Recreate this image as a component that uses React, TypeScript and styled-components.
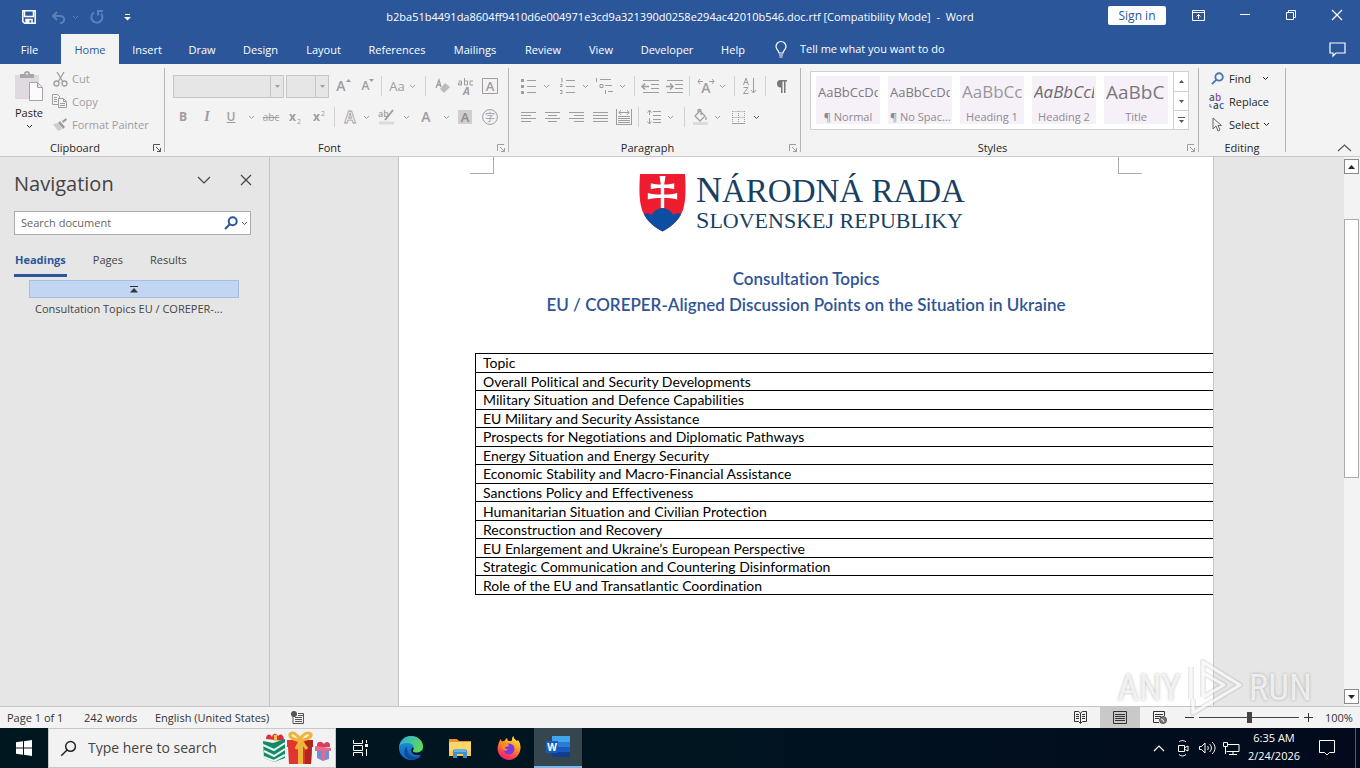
import React from "react";
import styled, { createGlobalStyle } from "styled-components";

const UI = `"Open Sans", "Noto Sans", sans-serif`;
const BLUE = "#2b579a";
const DIM = "#a09da0";

const Global = createGlobalStyle`
  *, *::before, *::after { box-sizing: border-box; }
  html, body { margin: 0; padding: 0; }
  body { font-family: ${UI}; font-size: 11px; line-height: 16px; color: #262626; background: #e6e6e6; }
  button, input { font: inherit; color: inherit; margin: 0; }
  button { padding: 0; border: 0; background: none; }
  svg { display: block; flex: none; overflow: visible; }
`;

const Screen = styled.div`
  display: flex;
  flex-direction: column;
  height: 100vh;
  overflow: hidden;
`;

/* ---------- title bar ---------- */

const TitleBar = styled.header`
  display: grid;
  grid-template-columns: 1fr auto 1fr;
  align-items: center;
  height: 34px;
  flex: none;
  background: ${BLUE};
  color: #fff;
`;

const QuickAccess = styled.div`
  display: flex;
  align-items: center;
  padding-left: 15px;
`;

const TitleText = styled.h1`
  margin: 0;
  font-size: 11px;
  font-weight: 400;
  white-space: nowrap;
`;

const WindowButtons = styled.div`
  display: flex;
  align-items: center;
  justify-content: flex-end;
  padding-bottom: 4px;
`;

const SignIn = styled.button`
  width: 58px;
  height: 19px;
  margin-right: 9px;
  border-radius: 2px;
  background: #fff;
  color: ${BLUE};
  font-size: 12px;
  line-height: 19px;
`;

const Cell = styled.button<{ $w?: number; $h?: number; $color?: string }>`
  display: flex;
  align-items: center;
  justify-content: center;
  flex: none;
  width: ${(p) => p.$w ?? 24}px;
  height: ${(p) => p.$h ?? 24}px;
  color: ${(p) => p.$color ?? "inherit"};
`;

/* ---------- tabs ---------- */

const TabStrip = styled.nav`
  display: flex;
  align-items: stretch;
  height: 30px;
  flex: none;
  background: ${BLUE};
  color: #fff;
`;

const Tab = styled.button<{ $w: number; $active?: boolean }>`
  width: ${(p) => p.$w}px;
  flex: none;
  padding-top: 2px;
  background: ${(p) => (p.$active ? "#f3f3f3" : "transparent")};
  color: ${(p) => (p.$active ? BLUE : "#fff")};
  &:first-child { margin-right: 2px; }
`;

const TellMe = styled.button`
  display: flex;
  align-items: center;
  gap: 13px;
  margin-left: 16px;
`;

const CommentButton = styled.button`
  margin-left: auto;
  margin-right: 14px;
`;

/* ---------- ribbon ---------- */

const Ribbon = styled.section`
  display: flex;
  height: 93px;
  flex: none;
  padding: 4px 0 4px;
  background: #f3f3f3;
  border-bottom: 1px solid #c8c8c8;
`;

const Group = styled.div<{ $w: number }>`
  display: flex;
  flex-direction: column;
  flex: none;
  width: ${(p) => p.$w}px;
  border-right: 1px solid #b5b5b5;
`;

const GroupBody = styled.div<{ $pad?: string }>`
  display: flex;
  flex: 1;
  padding: ${(p) => p.$pad ?? "0"};
`;

const GroupFooter = styled.div`
  display: flex;
  align-items: center;
  height: 12px;
  margin-bottom: -2px;
`;

const FooterLabel = styled.span`
  flex: 1;
  text-align: center;
  line-height: 12px;
`;

const LauncherButton = styled.button<{ $dim?: boolean }>`
  display: flex;
  align-items: center;
  justify-content: center;
  width: 14px;
  color: ${(p) => (p.$dim ? DIM : "#555")};
`;

const Rows = styled.div`
  display: flex;
  flex-direction: column;
  gap: 7px;
`;

const ToolRow = styled.div<{ $pad?: number }>`
  display: flex;
  align-items: center;
  height: 24px;
  padding-left: ${(p) => p.$pad ?? 0}px;
  color: ${DIM};
`;

const Divider = styled.i<{ $m?: string }>`
  width: 1px;
  height: 20px;
  flex: none;
  margin: ${(p) => p.$m ?? "0 3px"};
  background: #d2d0d2;
`;

const ComboBox = styled.button<{ $w: number }>`
  display: flex;
  justify-content: flex-end;
  width: ${(p) => p.$w}px;
  height: 23px;
  margin-right: 2px;
  border: 1px solid #c6c6c6;
  background: #e6e6e6;
`;

const ComboArrow = styled.span`
  display: flex;
  align-items: center;
  justify-content: center;
  width: 13px;
  height: 21px;
  border-left: 1px solid #c6c6c6;
`;

const PasteButton = styled.button`
  display: flex;
  flex-direction: column;
  align-items: center;
  width: 48px;
  padding: 3px 0 0 10px;
  gap: 3px;
  color: #262626;
`;

const CommandList = styled.div<{ $color: string }>`
  display: flex;
  flex-direction: column;
  margin-top: -1px;
  color: ${(p) => p.$color};
`;

const Command = styled.button`
  display: flex;
  align-items: center;
  gap: 4px;
  height: 23px;
  white-space: nowrap;
`;

const CommandCaret = styled.span<{ $m: number }>`
  margin-left: ${(p) => p.$m}px;
`;

const Glyph = styled.span<{ $size?: number; $weight?: number; $italic?: boolean; $line?: string }>`
  font-size: ${(p) => p.$size ?? 12}px;
  font-weight: ${(p) => p.$weight ?? 600};
  font-style: ${(p) => (p.$italic ? "italic" : "normal")};
  font-family: ${(p) => (p.$italic ? `"Liberation Serif", serif` : UI)};
  text-decoration: ${(p) => p.$line ?? "none"};
  line-height: 16px;
`;

const Gallery = styled.div`
  display: flex;
  width: 379px;
  height: 59px;
  border: 1px solid #d0d0d0;
  background: #fff;
`;

const Tiles = styled.div`
  display: flex;
  flex: 1;
  gap: 8px;
  padding: 4px 0 0 5px;
`;

const Tile = styled.button`
  width: 64px;
  height: 48px;
  padding: 0 2px;
  overflow: hidden;
  background: #f6f1f8;
  color: #8f8a90;
  text-align: center;
  white-space: nowrap;
`;

const Sample = styled.span<{ $size: number; $italic?: boolean; $color: string }>`
  display: block;
  height: 26px;
  overflow: hidden;
  text-align: left;
  line-height: 32px;
  font-size: ${(p) => p.$size}px;
  font-style: ${(p) => (p.$italic ? "italic" : "normal")};
  color: ${(p) => p.$color};
`;

const TileName = styled.span`
  display: block;
  padding-top: 7px;
`;

const GalleryScroll = styled.div`
  display: grid;
  grid-template-rows: 1fr 1fr 1fr;
  width: 15px;
  border-left: 1px solid #d0d0d0;
  color: #555;
  button {
    display: flex;
    align-items: center;
    justify-content: center;
  }
  button + button { border-top: 1px solid #d0d0d0; }
`;

const Collapse = styled.button`
  margin: auto 8px 0 auto;
`;

/* ---------- workspace ---------- */

const Workspace = styled.main`
  display: flex;
  flex: 1;
  min-height: 0;
  background: #e6e6e6;
`;

const NavPane = styled.aside`
  display: flex;
  flex-direction: column;
  width: 270px;
  flex: none;
  padding: 7px 2px 0 14px;
  border-right: 1px solid #c3c3c3;
`;

const NavHead = styled.div`
  display: flex;
  align-items: center;
  height: 32px;
`;

const NavTitle = styled.h2`
  flex: 1;
  margin: 0;
  padding-top: 8px;
  font-size: 20px;
  line-height: 32px;
  font-weight: 400;
  color: #444;
`;

const SearchDoc = styled.label`
  display: flex;
  align-items: center;
  width: 237px;
  height: 24px;
  margin-top: 15px;
  padding-left: 6px;
  border: 1px solid #ababab;
  background: #fff;
  color: ${BLUE};
  input {
    flex: 1;
    min-width: 0;
    padding: 0;
    border: 0;
    outline: 0;
    background: none;
  }
  input::placeholder { color: #666; opacity: 1; }
`;

const NavTabs = styled.div`
  display: flex;
  gap: 25px;
  height: 42px;
  padding-top: 13px;
`;

const NavTab = styled.button<{ $active?: boolean }>`
  height: 29px;
  padding: 0 1px 2px;
  font-weight: ${(p) => (p.$active ? 700 : 400)};
  color: ${(p) => (p.$active ? BLUE : "#444")};
  border-bottom: 3px solid ${(p) => (p.$active ? BLUE : "transparent")};
`;

const Outline = styled.div`
  margin-left: 15px;
  margin-top: 3px;
  width: 210px;
`;

const OutlineTop = styled.button`
  display: flex;
  align-items: center;
  justify-content: center;
  width: 100%;
  height: 18px;
  border: 1px solid #a3bde3;
  background: #c2d5f2;
`;

const OutlineItem = styled.a`
  display: block;
  padding: 3px 6px;
  color: #444;
  text-decoration: none;
  white-space: nowrap;
`;

const DocArea = styled.div`
  display: flex;
  justify-content: center;
  flex: 1;
  min-width: 0;
  padding-right: 2px;
  overflow: hidden;
`;

const Page = styled.article`
  width: 816px;
  flex: none;
  overflow: hidden;
  background: #fff;
  border: solid #c6c6c6;
  border-width: 0 1px;
  font-family: Lato, sans-serif;
  font-variant-ligatures: none;
`;

const CropMarks = styled.div`
  display: flex;
  justify-content: space-between;
  padding: 0 71px;
`;

const CropMark = styled.i<{ $side: "left" | "right" }>`
  width: 24px;
  height: 17px;
  border-bottom: 1px solid #ababab;
  border-${(p) => (p.$side === "left" ? "right" : "left")}: 1px solid #ababab;
`;

const Letterhead = styled.div`
  display: flex;
  justify-content: center;
  gap: 10px;
  padding-right: 8px;
  color: #173f63;
  font-family: "Liberation Serif", serif;
`;

const LetterLines = styled.div`
  display: flex;
  flex-direction: column;
  white-space: nowrap;
`;

const LetterLine = styled.span<{ $size: number; $line: number }>`
  font-size: ${(p) => p.$size}px;
  line-height: ${(p) => p.$line}px;
`;

const Initial = styled.span<{ $size: number }>`
  font-size: ${(p) => p.$size}px;
`;

const DocTitle = styled.h3`
  margin: 33px 0 35px;
  text-align: center;
  font-size: 17px;
  line-height: 26px;
  font-weight: 600;
  color: #2f5496;
`;

const TopicTable = styled.table`
  width: calc(100% + 100px);
  height: 242px;
  margin-left: 76px;
  border-collapse: collapse;
  font-size: 14px;
  line-height: 16px;
  color: #000;
  td, th {
    padding: 1px 7px 0;
    border: 1px solid #000;
    text-align: left;
    font-weight: 400;
  }
`;

const ScrollBar = styled.div`
  display: flex;
  flex-direction: column;
  width: 16px;
  flex: none;
  padding: 2px 1px 2px 0;
  background: #f3f3f3;
`;

const ScrollArrow = styled.button`
  display: flex;
  align-items: center;
  justify-content: center;
  height: 15px;
  border: 1px solid #8a8a8a;
  background: #fff;
`;

const ScrollTrack = styled.div`
  flex: 1;
  padding-top: 45px;
`;

const ScrollThumb = styled.div`
  height: 55%;
  border: 1px solid #ababab;
  background: #fff;
`;

/* ---------- status bar ---------- */

const StatusBar = styled.footer`
  display: flex;
  align-items: center;
  height: 22px;
  flex: none;
  padding: 0 8px 0 7px;
  border-top: 1px solid #c6c6c6;
  background: #f3f3f3;
  color: #333;
  white-space: nowrap;
`;

const StatusItem = styled.span<{ $w: number }>`
  width: ${(p) => p.$w}px;
`;

const ViewButtons = styled.div`
  display: flex;
  align-self: stretch;
  margin-left: auto;
`;

const ViewButton = styled.button<{ $active?: boolean }>`
  display: flex;
  align-items: center;
  justify-content: center;
  width: 40px;
  background: ${(p) => (p.$active ? "#c9c9c9" : "transparent")};
`;

const Zoom = styled.div`
  display: flex;
  align-items: center;
  margin-left: 5px;
`;

const ZoomSlider = styled.input`
  appearance: none;
  width: 100px;
  height: 12px;
  margin: 0 5px;
  background: linear-gradient(#444, #444) center / 100% 1px no-repeat;
  &::-webkit-slider-thumb {
    appearance: none;
    width: 5px;
    height: 11px;
    background: #444;
  }
`;

const Percent = styled.span`
  width: 27px;
  margin-left: 12px;
`;

/* ---------- task bar ---------- */

const TaskBar = styled.footer`
  display: flex;
  align-items: stretch;
  height: 40px;
  flex: none;
  background: linear-gradient(90deg, #00171f, #001420 50%, #020a1c);
  color: #fff;
`;

const TaskButton = styled.button<{ $w?: number; $active?: boolean }>`
  display: flex;
  align-items: center;
  justify-content: center;
  width: ${(p) => p.$w ?? 49}px;
  background: ${(p) => (p.$active ? "#35464f" : "transparent")};
  border-bottom: ${(p) => (p.$active ? "2px solid #76b9ed" : "0")};
`;

const TaskSearch = styled.label`
  display: flex;
  align-items: center;
  width: 288px;
  padding: 0 3px 0 11px;
  border: 1px solid #c8c8c8;
  background: #f2f2f2;
  color: #222;
  input {
    flex: 1;
    min-width: 0;
    padding: 0 0 0 11px;
    border: 0;
    outline: 0;
    background: none;
    font-size: 14px;
  }
  input::placeholder { color: #444; opacity: 1; }
`;

const Tray = styled.div`
  display: flex;
  align-items: center;
  margin-left: auto;
`;

const Clock = styled.time`
  width: 62px;
  padding-bottom: 2px;
  text-align: center;
  line-height: 18px;
`;

const ShowDesktop = styled.button`
  width: 5px;
  height: 40px;
  margin-left: 6px;
  border-left: 1px solid #56606a;
`;

const Watermark = styled.div`
  position: absolute;
  right: 48px;
  bottom: 50px;
  display: flex;
  align-items: center;
  gap: 6px;
  height: 60px;
  font-family: "Roboto Condensed", "Liberation Sans Narrow", "Liberation Sans", sans-serif;
  font-size: 37px;
  line-height: 40px;
  color: rgba(255, 255, 255, 0.75);
  text-shadow: 0 0 3px rgba(110, 110, 110, 0.5);
  pointer-events: none;
`;

/* ---------- icons ---------- */

type SvgProps = { w: number; h: number; children: React.ReactNode; sw?: number };
const Svg = ({ w, h, children, sw = 1 }: SvgProps) => (
  <svg width={w} height={h} viewBox={`0 0 ${w} ${h}`} fill="none" stroke="currentColor" strokeWidth={sw} aria-hidden="true">
    {children}
  </svg>
);

const Caret = () => (
  <Svg w={7} h={5} sw={1}><path d="M1 1l2.500 2.500L6 1" /></Svg>
);
const Triangle = ({ up }: { up?: boolean }) => (
  <Svg w={7} h={4}><path d={up ? "M0 4h7L3.500 0z" : "M0 0h7L3.500 4z"} fill="currentColor" stroke="none" /></Svg>
);
const SmallTriangle = ({ up }: { up?: boolean }) => (
  <Svg w={5} h={3}><path d={up ? "M0 3h5L2.500 0z" : "M0 0h5L2.500 3z"} fill="currentColor" stroke="none" /></Svg>
);
const Launcher = ({ dim }: { dim?: boolean }) => (
  <LauncherButton $dim={dim} aria-label="More options">
    <Svg w={8} h={8}><path d="M.5 7V.5H7M3 3l4.500 4.500M7.500 4v3.500H4" /></Svg>
  </LauncherButton>
);
const Close = () => (
  <Svg w={12} h={12} sw={1.2}><path d="M1 1l10 10M11 1L1 11" /></Svg>
);
const Lines = ({ rows }: { rows: [number, number][] }) => (
  <Svg w={15} h={10}>
    {rows.map(([a, b], i) => <path key={i} d={`M${a} ${i * 3 + 0.5}H${b}`} />)}
  </Svg>
);
const Magnifier = ({ s = 13, sw = 2 }: { s?: number; sw?: number }) => (
  <svg width={s} height={s} viewBox="0 0 14 14" fill="none" stroke="currentColor" strokeWidth={sw} aria-hidden="true">
    <circle cx="8.700" cy="5.300" r="4" /><path d="M5.800 8.200L1 13" />
  </svg>
);

const Shield = () => (
  <svg width="47" height="58" viewBox="0 1 47 58" role="img" aria-label="Coat of arms">
    <defs>
      <clipPath id="shield"><path d="M1 1h45c.8 14 1 25-1.500 34C42 45 34 53 23.500 58.500 13 53 5 45 2.500 35 0 26 .2 15 1 1z" /></clipPath>
    </defs>
    <g clipPath="url(#shield)">
      <path fill="#ed1c2e" d="M0 0h47v59H0z" />
      <path fill="#0b4ea2" d="M0 45c3-5 8-6 13-3 1-4 7-7 10.500-7S33 38 34 42c5-3 10-2 13 3v14H0z" />
      <path fill="#fff" d="M20.500 3h6l-1.300 8.500c3.500 0 7-.4 10-1.300v6c-3-.8-6.500-1.200-10-1.200v6.500c4.500 0 9-.3 13-1.500v6.500c-4-1.200-8.500-1.500-13-1.500V35h-3.400V25c-4.500 0-9 .3-13 1.500V20c4 1.200 8.500 1.500 13 1.500V15c-3.500 0-7 .4-10 1.200v-6c3 .9 6.500 1.300 10 1.300z" />
    </g>
  </svg>
);

const PasteIcon = () => (
  <svg width="30" height="31" viewBox="0 0 30 31" fill="none" aria-hidden="true">
    <path fill="#dedadf" d="M1 4h24v24H1z" />
    <path fill="#a9a6a9" d="M6 3h4a3 3 0 0 1 6 0h4v4H6z" /><circle cx="13" cy="2.800" r="1" fill="#f3f3f3" />
    <path fill="#fbfafc" stroke="#a9a0ab" d="M15.500 11.500h8l5 5v13h-13zM23.500 11.500v5h5" />
  </svg>
);

const Gifts = () => (
  <svg width="69" height="34" viewBox="0 0 69 34" aria-hidden="true">
    <path fill="#d8333a" d="M3 8c0-5 4-6 6-2 1-4 4-4 6-1 3-3 6-1 6 5z" /><path fill="#f2c14e" d="M11 4h3v6h-3z" />
    <path fill="#128a6a" d="M0 10l10 2 12-4v19l-11 4-10-4z" />
    <path stroke="#e6f5ef" strokeWidth="2" fill="none" d="M0 14l11 5 11-7M1 20l10 5 11-7M1 26l10 4 11-6" />
    <path fill="#e0362f" d="M24 9h26v7h-1l-1 17H26l-1-17h-1z" /><path fill="#b32620" d="M42 9h8v7h-1l-1 17h-6z" />
    <path fill="#f0b43c" d="M35 9h5v24h-5z" />
    <path fill="none" stroke="#f0b43c" strokeWidth="3" d="M37 10C31 8 26 7 27 3c3-3 8 1 10 6 2-5 7-9 11-6 1 4-5 5-11 7l-4 8M38 10l6 8" />
    <path fill="#d5405b" d="M54 16h13v-3c-2-3-5-2-6 0-2-3-6-3-7 0z" /><path fill="#6c8fd6" d="M54 18h12v10l-6 2-6-3z" />
    <path fill="#e46b8e" d="M52 15l16 2v3H52zM59 16h3v13h-3z" />
  </svg>
);

const EdgeIcon = () => (
  <svg width="24" height="24" viewBox="0 0 24 24" aria-hidden="true">
    <defs>
      <linearGradient id="edgeTop" x1="0" y1="0" x2="1" y2=".4"><stop offset="0" stopColor="#2aa8e8" /><stop offset="1" stopColor="#5ed95a" /></linearGradient>
      <linearGradient id="edgeBody" x1="0" y1="0" x2="0" y2="1"><stop offset="0" stopColor="#1b9de2" /><stop offset="1" stopColor="#0f5fb8" /></linearGradient>
    </defs>
    <circle cx="12" cy="12" r="12" fill="url(#edgeBody)" />
    <path fill="url(#edgeTop)" d="M.3 10C1.500 4 6 0 12 0c7 0 12 5 12 10.500 0 4-3 6-6.500 6-3 0-4-1-3.500-2 1-1.200 1-2 1-2.700C14.500 8.500 11.500 7 8.500 7 5 7 1.500 8 .3 10z" />
    <path fill="#12499a" d="M8 12c0 5 4 9.500 9.500 9.500 2 0 3.500-.5 4.500-1.200C20 23 16 24 13 24 8 23.500 5 19 5.500 15c.2-2 1.300-3.500 2.800-4.200-.3.500-.3.800-.3 1.200z" />
    <path fill="#00151f" d="M14 14.500c-.6 1.200.8 2.200 3.500 2.200 2.500 0 5-1.200 6-3.500.3 2-.3 4-1.500 5.300-1.500 1-8 1-9.500-2.500-.7-2 0-3 1-4.500 1.500.6 1 2 .5 3z" />
  </svg>
);

const FolderIcon = () => (
  <svg width="22" height="20" viewBox="0 0 22 20" aria-hidden="true">
    <path fill="#e8912a" d="M0 1h8l2 2h12v4H0z" /><path fill="#fdd568" d="M0 4h22v14H0z" />
    <path fill="#f8c94c" d="M0 13h22v5H0z" /><path fill="#3f8fd0" d="M4 20v-8h14v8h-4v-4H8v4z" /><path fill="#65b1e6" d="M5 11h12v3H5z" />
  </svg>
);

const FirefoxIcon = () => (
  <svg width="24" height="24" viewBox="0 0 24 24" aria-hidden="true">
    <defs>
      <linearGradient id="fox" x1=".8" y1="0" x2=".3" y2="1"><stop offset="0" stopColor="#fff14a" /><stop offset=".4" stopColor="#ff9a1f" /><stop offset=".8" stopColor="#ff3b4d" /><stop offset="1" stopColor="#e0218a" /></linearGradient>
    </defs>
    <path fill="url(#fox)" d="M1.500 8C2 5.500 3 4 4 3c0 1.200.3 2 .8 2.500C5.500 5 6.500 4.800 7.500 5 8 3.500 9 2.500 10.500 2c-.5 1.500 0 2.500 1.500 3 2 .3 3 0 3-1.500C15 2 15.500.6 16.500 0c0 2.500 2 3.500 3.500 5l1-1c2 2.500 2.700 5.500 2.500 8.500C23 19 18 24 12 24S.5 19 .5 12.500C.5 11 .8 9.500 1.500 8z" />
    <circle cx="12" cy="13" r="5.500" fill="#7a3be0" /><path fill="#ff8a2a" d="M5 8c2-1.500 5-1.500 7 1l-1 1.500c-2 0-3 .5-3 1.500s1.500 1.500 3 1c-1 2.500-4.500 2-5.500-.5C5 11 4.500 9.500 5 8z" />
  </svg>
);

const WordIcon = () => (
  <svg width="24" height="22" viewBox="0 0 24 22" aria-hidden="true">
    <path fill="#41a5ee" d="M6 0h18v6H6z" /><path fill="#2b7cd3" d="M6 6h18v5H6z" /><path fill="#185abd" d="M6 11h18v5H6z" /><path fill="#103f91" d="M6 16h18v5H6z" />
    <path fill="#185abd" d="M0 5h12v12H0z" />
    <text x="6" y="15" fontSize="10" fontWeight="700" fontFamily="Open Sans, sans-serif" textAnchor="middle" fill="#fff">W</text>
  </svg>
);

/* ---------- data ---------- */

const TABS: [string, number][] = [
  ["File", 59], ["Home", 58], ["Insert", 56], ["Draw", 54], ["Design", 63], ["Layout", 63],
  ["References", 84], ["Mailings", 72], ["Review", 64], ["View", 52], ["Developer", 80], ["Help", 52],
];

const STYLES = [
  { name: "¶ Normal", sample: "AaBbCcDd", size: 13, color: "#7d777e" },
  { name: "¶ No Spac...", sample: "AaBbCcDd", size: 13, color: "#7d777e" },
  { name: "Heading 1", sample: "AaBbCcD", size: 17, color: "#9b959c" },
  { name: "Heading 2", sample: "AaBbCcD", size: 17, color: "#6f6970", italic: true },
  { name: "Title", sample: "AaBbC", size: 19, color: "#7d777e" },
];

const TOPICS = [
  "Overall Political and Security Developments",
  "Military Situation and Defence Capabilities",
  "EU Military and Security Assistance",
  "Prospects for Negotiations and Diplomatic Pathways",
  "Energy Situation and Energy Security",
  "Economic Stability and Macro-Financial Assistance",
  "Sanctions Policy and Effectiveness",
  "Humanitarian Situation and Civilian Protection",
  "Reconstruction and Recovery",
  "EU Enlargement and Ukraine’s European Perspective",
  "Strategic Communication and Countering Disinformation",
  "Role of the EU and Transatlantic Coordination",
];

/* ---------- sections ---------- */

const Titlebar = () => (
  <TitleBar>
    <QuickAccess>
      <Cell $w={28} aria-label="Save">
        <Svg w={14} h={14} sw={1.5}><path d="M.8.8h12.400v12.400H2.500L.8 11.500z" /><path d="M2.500 1v5.500h9V1M4 13V9.500h6V13" /><path d="M4 10h3.500v3H4z" fill="currentColor" stroke="none" /></Svg>
      </Cell>
      <Cell $w={30} $color="#5d80b8" aria-label="Undo">
        <Svg w={15} h={13} sw={2}><path d="M6 1L2 5l4 4M2 5h7c6 0 5 7 0 7" /></Svg>
      </Cell>
      <Cell $w={5} $color="#5d80b8" aria-label="Undo list"><Caret /></Cell>
      <Cell $w={38} $color="#5d80b8" aria-label="Redo">
        <Svg w={14} h={14} sw={2}><path d="M4 2.500a5.500 5.500 0 1 0 7 1M8 5.500V1h5" /></Svg>
      </Cell>
      <Cell $w={22} aria-label="Customize">
        <Svg w={7} h={7}><path d="M1 .5h5" /><path d="M0 3h7L3.500 6.500z" fill="currentColor" stroke="none" /></Svg>
      </Cell>
    </QuickAccess>
    <TitleText>b2ba51b4491da8604ff9410d6e004971e3cd9a321390d0258e294ac42010b546.doc.rtf [Compatibility Mode]&nbsp; -&nbsp; Word</TitleText>
    <WindowButtons>
      <SignIn>Sign in</SignIn>
      <Cell $w={47} aria-label="Ribbon display">
        <Svg w={13} h={11}><path d="M.5.5h12v10H.5zM.5 2.500h12M6.500 9V4.500M4.500 6.500l2-2 2 2" /></Svg>
      </Cell>
      <Cell $w={46} aria-label="Minimize"><Svg w={10} h={2}><path d="M0 .5h10" /></Svg></Cell>
      <Cell $w={46} aria-label="Restore"><Svg w={10} h={10}><path d="M.5 2.500h7v7h-7zM2.500 2.500v-2h7v7h-2" /></Svg></Cell>
      <Cell $w={46} aria-label="Close"><Close /></Cell>
    </WindowButtons>
  </TitleBar>
);

const Tabs = () => (
  <TabStrip>
    {TABS.map(([t, w]) => <Tab key={t} $w={w} $active={t === "Home"}>{t}</Tab>)}
    <TellMe>
      <Svg w={12} h={17} sw={1.2}><path d="M4 12c0-2.500-3-3.500-3-6.500a5 5 0 0 1 10 0C11 8.500 8 9.500 8 12zM4 14h4M4.500 16h3" /></Svg>
      Tell me what you want to do
    </TellMe>
    <CommentButton aria-label="Comments">
      <Svg w={17} h={15} sw={1.2}><path d="M1 1h15v10H7l-3 3v-3H1z" /></Svg>
    </CommentButton>
  </TabStrip>
);

const ClipboardGroup = () => (
  <Group $w={165}>
    <GroupBody>
      <PasteButton><PasteIcon />Paste<Caret /></PasteButton>
      <CommandList $color={DIM}>
        <Command>
          <Svg w={20} h={16} sw={1.3}><path d="M9 1l6 10M16 1l-6 10" /><circle cx="8.500" cy="12.500" r="2.500" /><circle cx="16.500" cy="12.500" r="2.500" /></Svg>Cut
        </Command>
        <Command>
          <Svg w={20} h={15}><path d="M10 10.500H4.500V.5h5l2 2V4M6 3.500h3M6 5.500h3M6 7.500h3M10.500 4.500h5l3 3v6h-8zM15.500 4.500v3h3M12 9.500h5M12 11.500h5" /></Svg>Copy
        </Command>
        <Command>
          <Svg w={20} h={14}><path fill="currentColor" stroke="none" d="M14 3l4-3 1 2-4 3zM12 3l5 6-2 2-5-6z" /><path fill="#cfccd0" stroke="none" d="M5 6l5-1 4 6-4 2z" /></Svg>Format Painter
        </Command>
      </CommandList>
    </GroupBody>
    <GroupFooter><FooterLabel>Clipboard</FooterLabel><Launcher /></GroupFooter>
  </Group>
);

const FontGroup = () => (
  <Group $w={344}>
    <GroupBody $pad="6px 0 0 6px">
      <Rows>
        <ToolRow $pad={2}>
          <ComboBox $w={111} aria-label="Font"><ComboArrow><SmallTriangle /></ComboArrow></ComboBox>
          <ComboBox $w={43} aria-label="Font size"><ComboArrow><SmallTriangle /></ComboArrow></ComboBox>
          <Cell $w={25} aria-label="Grow font"><Glyph $size={14}>A</Glyph><Svg w={5} h={14}><path d="M0 3l2.500-3L5 3z" fill="currentColor" stroke="none" /></Svg></Cell>
          <Cell aria-label="Shrink font"><Glyph>A</Glyph><Svg w={5} h={14}><path d="M0 0l2.500 3L5 0z" fill="currentColor" stroke="none" /></Svg></Cell>
          <Divider $m="0 3px 0 1px" />
          <Cell aria-label="Change case"><Glyph $size={13} $weight={400}>Aa</Glyph></Cell>
          <Cell $w={7} aria-label="Case list"><Caret /></Cell>
          <Divider $m="0 4px 0 9px" />
          <Cell aria-label="Clear formatting">
            <Svg w={15} h={15}><path d="M1 9l3-8 2 7M2 6h4" strokeWidth="1.300" /><path fill="#bdbabd" stroke="none" d="M10 4l5 4-6 6-4-4z" /></Svg>
          </Cell>
          <Cell aria-label="Phonetic guide">
            <Svg w={16} h={16}>
              <path d="M.5 3h3v4h-3V5h3M6.500 0v7h3V3h-3M15 3h-3v4h3" />
              <text x="5" y="17" fontSize="11" fontStyle="italic" fontWeight="700" fill="currentColor" stroke="none">A</text>
            </Svg>
          </Cell>
          <Cell aria-label="Character border">
            <Svg w={16} h={16}><path d="M.5.5h15v15H.5z" /><text x="8" y="13" fontSize="13" fontWeight="600" textAnchor="middle" fill="currentColor" stroke="none">A</text></Svg>
          </Cell>
        </ToolRow>
        <ToolRow>
          <Cell aria-label="Bold"><Glyph $weight={700}>B</Glyph></Cell>
          <Cell aria-label="Italic"><Glyph $size={14} $italic>I</Glyph></Cell>
          <Cell aria-label="Underline"><Glyph $line="underline">U</Glyph></Cell>
          <Cell $w={16} aria-label="Underline list"><Caret /></Cell>
          <Cell aria-label="Strikethrough"><Glyph $size={10} $weight={400} $line="line-through">abc</Glyph></Cell>
          <Cell aria-label="Subscript"><Svg w={12} h={12}><text x="0" y="10" fontSize="12" fontWeight="700" fill="currentColor" stroke="none">x</text><text x="8" y="13" fontSize="7" fill="currentColor" stroke="none">2</text></Svg></Cell>
          <Cell aria-label="Superscript"><Svg w={12} h={12}><text x="0" y="10" fontSize="12" fontWeight="700" fill="currentColor" stroke="none">x</text><text x="8" y="5" fontSize="7" fill="currentColor" stroke="none">2</text></Svg></Cell>
          <Divider />
          <Cell aria-label="Text effects">
            <Svg w={14} h={14}><text x="7" y="13" fontSize="16" fontWeight="700" textAnchor="middle" stroke="currentColor" strokeWidth=".8">A</text></Svg>
          </Cell>
          <Cell $w={8} aria-label="Effects list"><Caret /></Cell>
          <Cell $w={32} aria-label="Highlight">
            <Svg w={16} h={16}><text x="0" y="8" fontSize="9" fontWeight="600" fill="currentColor" stroke="none">ab</text><path d="M15 1L7 11" strokeWidth="2" /><path d="M1 14h15" stroke="#dcdadc" strokeWidth="3" /></Svg>
          </Cell>
          <Cell $w={8} aria-label="Highlight list"><Caret /></Cell>
          <Cell $w={32} aria-label="Font color"><Glyph $size={14}>A</Glyph></Cell>
          <Cell $w={8} aria-label="Color list"><Caret /></Cell>
          <Cell $w={30} aria-label="Shading">
            <Svg w={14} h={14}><path d="M0 0h14v14H0z" fill="#d0ced0" stroke="none" /><text x="7" y="12" fontSize="13" fontWeight="600" textAnchor="middle" fill="#8d8a8d" stroke="none">A</text></Svg>
          </Cell>
          <Cell $w={20} aria-label="Enclose characters">
            <Svg w={16} h={16}><circle cx="8" cy="8" r="7.400" /><text x="8" y="12" fontSize="10" fontFamily="Noto Sans CJK SC" textAnchor="middle" fill="currentColor" stroke="none">字</text></Svg>
          </Cell>
        </ToolRow>
      </Rows>
    </GroupBody>
    <GroupFooter><FooterLabel>Font</FooterLabel><Launcher dim /></GroupFooter>
  </Group>
);

const ParagraphGroup = () => (
  <Group $w={292}>
    <GroupBody $pad="6px 0 0 7px">
      <Rows>
        <ToolRow>
          <Cell aria-label="Bullets"><Svg w={15} h={15}><path d="M6 1.500h9M6 7.500h9M6 13.500h9" /><path d="M0 1.500h3M0 7.500h3M0 13.500h3" strokeWidth="3" /></Svg></Cell>
          <Cell $w={12} aria-label="Bullet list"><Caret /></Cell>
          <Cell $w={30} aria-label="Numbering"><Svg w={15} h={16}><path d="M6 2.500h9M6 8.500h9M6 14.500h9M1 .5h1v4M0 6.500h2v2H0M0 12.500h2v3H0" /></Svg></Cell>
          <Cell $w={7} aria-label="Number list"><Caret /></Cell>
          <Cell $w={30} aria-label="Multilevel"><Svg w={17} h={16}><path d="M4 1.500h11M9 7.500h7M12 13.500h5M.5 0v4M4 6.500h3v3H4zM9.500 12v4" /></Svg></Cell>
          <Cell $w={7} aria-label="Multilevel list"><Caret /></Cell>
          <Divider $m="0 3px 0 8px" />
          <Cell aria-label="Decrease indent"><Svg w={17} h={13}><path d="M1 .5h16M9 4.500h8M9 8.500h8M1 12.500h16" /><path d="M0 6.500h7M3 3.500l-3 3 3 3" strokeWidth="1.500" /></Svg></Cell>
          <Cell aria-label="Increase indent"><Svg w={17} h={13}><path d="M1 .5h16M9 4.500h8M9 8.500h8M1 12.500h16" /><path d="M0 6.500h7M4 3.500l3 3-3 3" strokeWidth="1.500" /></Svg></Cell>
          <Divider $m="0 4px 0 3px" />
          <Cell aria-label="Asian layout"><Svg w={17} h={14}><text x="8" y="14" fontSize="14" fontWeight="600" textAnchor="middle" fill="currentColor" stroke="none">A</text><path d="M0 2.500h5M2 0L0 2.500 2 5M11 2.500h5M14 0l2 2.500L14 5" /></Svg></Cell>
          <Cell $w={8} aria-label="Asian list"><Caret /></Cell>
          <Divider $m="0 3px 0 8px" />
          <Cell aria-label="Sort"><Svg w={15} h={16}><path d="M.5 7l2.500-7 2.500 7M1 4.500h4M.5 9.500H5L.5 15.500H5.500M10.500 0v15M8 12l2.500 3 2.500-3" /></Svg></Cell>
          <Divider />
          <Cell $color="#7b787b" aria-label="Show marks"><Svg w={11} h={13}><path d="M4.500 0H11v1.500H9.500V13H8V1.500H6.500V13H5V7.500a3.700 3.700 0 0 1-.5-7.500z" fill="currentColor" stroke="none" /></Svg></Cell>
        </ToolRow>
        <ToolRow>
          <Cell aria-label="Align left"><Lines rows={[[0, 15], [0, 10], [0, 15], [0, 10]]} /></Cell>
          <Cell aria-label="Center"><Lines rows={[[0, 15], [3, 12], [0, 15], [3, 12]]} /></Cell>
          <Cell aria-label="Align right"><Lines rows={[[0, 15], [5, 15], [0, 15], [5, 15]]} /></Cell>
          <Cell aria-label="Justify"><Lines rows={[[0, 15], [0, 15], [0, 15], [0, 15]]} /></Cell>
          <Cell aria-label="Distribute"><Svg w={16} h={16}><path d="M.5 0v16M15.500 0v16M3 3.500h10M5 1L3 3.500 5 6M11 1l2 2.500L11 6M2 7.500h12M2 9.500h12M2 11.500h12M2 13.500h12M0 15.500h16" /></Svg></Cell>
          <Divider $m="0 3px 0 2px" />
          <Cell aria-label="Line spacing"><Svg w={15} h={16}><path d="M6 2.500h8M6 6.500h8M6 10.500h8M6 13.500h8M2.500 1v5M.5 3.500l2-2.500 2 2.500M2.500 9v6M.5 12.500l2 2.500 2-2.500" /></Svg></Cell>
          <Cell $w={8} aria-label="Spacing list"><Caret /></Cell>
          <Divider $m="0 3px 0 10px" />
          <Cell aria-label="Fill"><Svg w={15} h={16}><path d="M2 7l5-5 5 5-5 5zM5 5V1.500C5 0 8 0 8 1.500V6M13 8v3" strokeWidth="1.300" /><path d="M0 14.500h15" stroke="#dcdadc" strokeWidth="3" /></Svg></Cell>
          <Cell $w={10} aria-label="Fill list"><Caret /></Cell>
          <Cell $w={32} aria-label="Borders"><Svg w={13} h={13}><path d="M.5.5h12M.5 6.500h12M.5 0v12M6.500 0v12M12.500 0v12" strokeDasharray="1 1" /><path d="M0 12.500h13" /></Svg></Cell>
          <Cell $w={4} $color="#555" aria-label="Border list"><Caret /></Cell>
        </ToolRow>
      </Rows>
    </GroupBody>
    <GroupFooter><FooterLabel>Paragraph</FooterLabel><Launcher dim /></GroupFooter>
  </Group>
);

const StylesGroup = () => (
  <Group $w={398}>
    <GroupBody $pad="3px 0 0 9px">
      <Gallery>
        <Tiles>
          {STYLES.map((s) => (
            <Tile key={s.name}>
              <Sample $size={s.size} $italic={s.italic} $color={s.color}>{s.sample}</Sample>
              <TileName>{s.name}</TileName>
            </Tile>
          ))}
        </Tiles>
        <GalleryScroll>
          <button aria-label="Previous styles"><SmallTriangle up /></button>
          <button aria-label="Next styles"><SmallTriangle /></button>
          <button aria-label="All styles"><Svg w={7} h={7}><path d="M0 .5h7" /><path d="M1 3h5L3.500 6z" fill="currentColor" stroke="none" /></Svg></button>
        </GalleryScroll>
      </Gallery>
    </GroupBody>
    <GroupFooter><FooterLabel>Styles</FooterLabel><Launcher dim /></GroupFooter>
  </Group>
);

const EditingGroup = () => (
  <Group $w={87}>
    <GroupBody $pad="0 0 0 10px">
      <CommandList $color="#262626">
        <Command><Cell as="span" $w={16} $color="#4a74b4"><Magnifier /></Cell>Find<CommandCaret $m={7}><Caret /></CommandCaret></Command>
        <Command>
          <Svg w={16} h={16}>
            <g stroke="none" fontSize="10" fontWeight="600">
              <text x="0" y="7" fill="#555">a</text><text x="6" y="7" fill="#8b4fb5">b</text>
              <text x="4" y="15" fill="#444">a</text><text x="10" y="15" fill="#3b6fc0">c</text>
            </g>
            <path d="M1 10v3h2" stroke="#3b6fc0" />
          </Svg>Replace
        </Command>
        <Command><Cell as="span" $w={16} $color="#666"><Svg w={10} h={15}><path d="M1 1v11l3-3 2 5 2-1-2-4.500h3.500z" /></Svg></Cell>Select<Caret /></Command>
      </CommandList>
    </GroupBody>
    <GroupFooter><FooterLabel>Editing</FooterLabel></GroupFooter>
  </Group>
);

const Navigation = () => (
  <NavPane>
    <NavHead>
      <NavTitle>Navigation</NavTitle>
      <Cell $w={42} $color="#444" aria-label="Pane options"><Svg w={14} h={8} sw={1.2}><path d="M1 1l6 6 6-6" /></Svg></Cell>
      <Cell $w={42} $color="#444" aria-label="Close pane"><Close /></Cell>
    </NavHead>
    <SearchDoc>
      <input aria-label="Search document" placeholder="Search document" />
      <Magnifier s={14} />
      <Cell as="span" $w={12} $color="#555"><Caret /></Cell>
    </SearchDoc>
    <NavTabs>
      <NavTab $active>Headings</NavTab>
      <NavTab>Pages</NavTab>
      <NavTab>Results</NavTab>
    </NavTabs>
    <Outline>
      <OutlineTop aria-label="Jump to beginning"><Svg w={8} h={7}><path d="M0 .5h8" stroke="#333" /><path d="M0 6.500h8L4 2z" fill="#333" stroke="none" /></Svg></OutlineTop>
      <OutlineItem href="#top">Consultation Topics EU / COREPER-...</OutlineItem>
    </Outline>
  </NavPane>
);

const Document = () => (
  <DocArea>
    <Page id="top">
      <CropMarks><CropMark $side="left" /><CropMark $side="right" /></CropMarks>
      <Letterhead>
        <Shield />
        <LetterLines>
          <LetterLine $size={33} $line={33}><Initial $size={36}>N</Initial>ÁRODNÁ RADA</LetterLine>
          <LetterLine $size={22} $line={24}><Initial $size={24}>S</Initial>LOVENSKEJ REPUBLIKY</LetterLine>
        </LetterLines>
      </Letterhead>
      <DocTitle>Consultation Topics<br />EU / COREPER-Aligned Discussion Points on the Situation in Ukraine</DocTitle>
      <TopicTable>
        <tbody>
          <tr><th scope="col">Topic</th></tr>
          {TOPICS.map((t) => <tr key={t}><td>{t}</td></tr>)}
        </tbody>
      </TopicTable>
    </Page>
  </DocArea>
);

const Status = () => (
  <StatusBar>
    <StatusItem $w={77}>Page 1 of 1</StatusItem>
    <StatusItem $w={71}>242 words</StatusItem>
    <StatusItem $w={136}>English (United States)</StatusItem>
    <Svg w={13} h={13}><path d="M2 4.500v8h10.500v-10H7M4 6.500h7M4 8.500h7M4 10.500h7M7 4.500h5" stroke="#555" /><circle cx="3" cy="3" r="3" fill="#555" stroke="none" /></Svg>
    <ViewButtons>
      <ViewButton aria-label="Read mode"><Svg w={13} h={13}><path d="M6.500 2L4.500.500H.5v10h4l2 2 2-2h4V.5h-4zv10M2 3.500h3M2 5.500h3M2 7.500h3M8 3.500h3M8 5.500h3M8 7.500h3" /></Svg></ViewButton>
      <ViewButton $active aria-label="Print layout"><Svg w={14} h={13}><path d="M.5.5h13v12H.5zM2 3.500h10M2 5.500h10M2 7.500h10M2 9.500h10" /></Svg></ViewButton>
      <ViewButton aria-label="Web layout"><Svg w={14} h={13}><path d="M6 11.500H.5V.5h11V5M2 3.500h8M2 5.500h6M2 7.500h4" /><circle cx="10" cy="9" r="3.500" fill="#777" stroke="#555" /><path d="M8 8l2 1 1 2" stroke="#eee" /></Svg></ViewButton>
    </ViewButtons>
    <Zoom>
      <button aria-label="Zoom out"><Svg w={9} h={9}><path d="M0 4.500h9" /></Svg></button>
      <ZoomSlider type="range" aria-label="Zoom" defaultValue={50} />
      <button aria-label="Zoom in"><Svg w={9} h={9}><path d="M0 4.500h9M4.500 0v9" /></Svg></button>
      <Percent>100%</Percent>
    </Zoom>
  </StatusBar>
);

const Taskbar = () => (
  <TaskBar>
    <TaskButton $w={48} aria-label="Start"><Svg w={16} h={16}><path d="M0 2.300l7-1V7.500H0zM8 1.200L16 0v7.500H8zM0 8.500h7v6.200l-7-1zM8 8.500h8V16l-8-1.200z" fill="#fff" stroke="none" /></Svg></TaskButton>
    <TaskSearch>
      <Magnifier s={17} sw={1.2} />
      <input aria-label="Search" placeholder="Type here to search" />
      <Gifts />
    </TaskSearch>
    <TaskButton aria-label="Task view"><Svg w={17} h={16}><path d="M1.500 0v3.500h9V0M1.500 16v-3.500h9V16M1.500 5.500h9v5h-9zM14.500 0v3M14.500 9v7" /><path d="M13 4h3v3h-3z" fill="#fff" stroke="none" /></Svg></TaskButton>
    <TaskButton $w={51} aria-label="Edge"><EdgeIcon /></TaskButton>
    <TaskButton $w={48} aria-label="File Explorer"><FolderIcon /></TaskButton>
    <TaskButton $w={50} aria-label="Firefox"><FirefoxIcon /></TaskButton>
    <TaskButton $w={48} $active aria-label="Word"><WordIcon /></TaskButton>
    <Tray>
      <Cell aria-label="Hidden icons"><Svg w={12} h={7} sw={1.2}><path d="M1 6l5-5 5 5" /></Svg></Cell>
      <Cell aria-label="Meet now"><Svg w={12} h={16}><path d="M1.500 5.500h6v6h-6zM8 7.500l3-1.500v5L8 9.500M2 2c2-2 5-2 7 0M2 14.500c2 2 5 2 7 0" /></Svg></Cell>
      <Cell aria-label="Volume"><Svg w={17} h={14}><path d="M.5 5.500h2L6 2v10L2.500 8.500h-2zM8.500 5c1 1 1 3 0 4M10.500 3c2.500 2 2.500 6 0 8M13 1c4 3.500 4 8.500 0 12" /></Svg></Cell>
      <Cell aria-label="Network"><Svg w={17} h={13}><path d="M5 2.500h11v7H3.500M10 10v2.500M6 12.500h8M.5.500h4v4h-4zM2.500 5v7" /></Svg></Cell>
      <Clock>6:35 AM<br />2/24/2026</Clock>
      <Cell $w={44} aria-label="Notifications"><Svg w={16} h={16}><path d="M.5.5h15v12h-5L8 15l-2.500-2.500h-5z" /></Svg></Cell>
      <ShowDesktop aria-label="Show desktop" />
    </Tray>
  </TaskBar>
);

export default function App() {
  return (
    <Screen>
      <Global />
      <Titlebar />
      <Tabs />
      <Ribbon>
        <ClipboardGroup />
        <FontGroup />
        <ParagraphGroup />
        <StylesGroup />
        <EditingGroup />
        <Collapse aria-label="Collapse ribbon"><Svg w={15} h={8} sw={1.2}><path d="M1 7l6.500-6L14 7" stroke="#555" /></Svg></Collapse>
      </Ribbon>
      <Workspace>
        <Navigation />
        <Document />
        <ScrollBar>
          <ScrollArrow aria-label="Scroll up"><Triangle up /></ScrollArrow>
          <ScrollTrack><ScrollThumb /></ScrollTrack>
          <ScrollArrow aria-label="Scroll down"><Triangle /></ScrollArrow>
        </ScrollBar>
      </Workspace>
      <Status />
      <Taskbar />
      <Watermark>
        <span>ANY</span>
        <svg width="56" height="58" viewBox="0 0 56 58" fill="none" strokeLinejoin="round" aria-hidden="true">
          <g stroke="#8a8a8a" strokeOpacity=".2" strokeWidth="6">
            <path d="M16 38V3l37 23L6 54V40M16 14l21 12-21 12M4 8v32" />
          </g>
          <path d="M16 38V3l37 23L6 54V40M16 14l21 12-21 12M4 8v32" stroke="#fff" strokeOpacity=".75" strokeWidth="3" />
        </svg>
        <span>RUN</span>
      </Watermark>
    </Screen>
  );
}
